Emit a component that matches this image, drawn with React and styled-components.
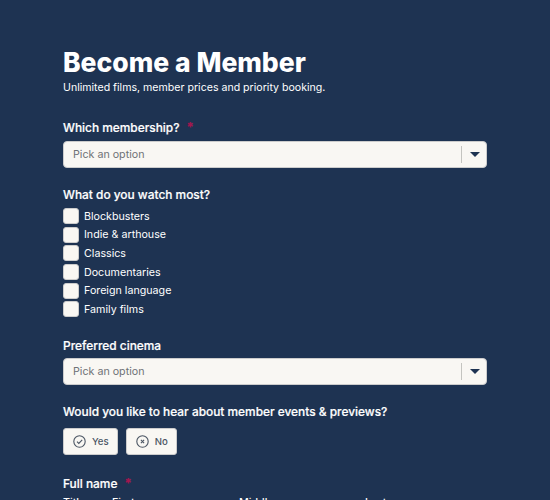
import styled, { createGlobalStyle } from 'styled-components';

const GlobalStyle = createGlobalStyle`
html, body {
  margin: 0;
  height: 100%;
  overflow: hidden;
  background: #1e3352;
  font-family: Inter, "Liberation Sans", sans-serif;
}
`

const Page = styled.div`
  padding: 44px 63px 0;
  color: #fff;
`

const Title = styled.h1`
  margin: 0;
  font-size: 26.5px;
  line-height: 36px;
  font-weight: 800;
  color: #fff;
`

const Subtitle = styled.p`
  margin: 0 0 23px;
  font-size: 10.6px;
  line-height: 16px;
  color: #fff;
`

const Field = styled.div`
  margin-bottom: ${props => props.$gap || 18}px;
`

const Label = styled.div`
  font-size: 11.9px;
  line-height: 18px;
  font-weight: 500;
  color: #fff;
  margin-bottom: ${props => props.$gap ?? 4}px;
  -webkit-text-stroke: 0.2px #fff;
`

const Star = styled.span`
  color: #a3174f;
  -webkit-text-stroke: 0.2px #a3174f;
  margin-left: 7px;
  font-size: 13px;
  line-height: 1;
  font-weight: 700;
`

const Select = styled.div`
  height: 27px;
  box-sizing: border-box;
  background: #f9f7f3;
  border: 1px solid #ccc;
  border-radius: 4px;
  display: flex;
  align-items: center;
  padding-left: 9px;
  font-size: 10.7px;
  color: #6f7276;
`

const Placeholder = styled.span`
  flex: 1;
`

const Divider = styled.span`
  width: 1px;
  height: 17px;
  background: #c4c4c0;
`

const Caret = styled.span`
  width: 0;
  height: 0;
  margin: 0 6px 0 8px;
  border-left: 5px solid transparent;
  border-right: 5px solid transparent;
  border-top: 5px solid #1e3352;
`

const CheckList = styled.div`
  display: flex;
  flex-direction: column;
  gap: 2.7px;
  margin-top: 4px;
`

const CheckRow = styled.div`
  display: flex;
  align-items: center;
  gap: 5px;
  font-size: 10.7px;
  height: 16px;
  color: #fff;
`

const Box = styled.span`
  width: 16px;
  height: 16px;
  box-sizing: border-box;
  background: #f9f7f3;
  border: 1px solid #ccc;
  border-radius: 3px;
`

const Buttons = styled.div`
  display: flex;
  gap: 8px;
  margin-top: 7px;
`

const Choice = styled.div`
  height: 27px;
  box-sizing: border-box;
  padding: 0 8px 0 9px;
  background: #f9f7f3;
  border: 1px solid #ccc;
  border-radius: 3px;
  display: flex;
  align-items: center;
  gap: 6px;
  font-size: 9.6px;
  font-weight: 500;
  color: #4b5563;
`

const NameRow = styled.div`
  display: grid;
  grid-template-columns: 49px 127px 126px 1fr;
  font-size: 10.7px;
  line-height: 16px;
  font-weight: 500;
  color: #fff;
`

const YesIcon = () => (
  <svg width="13" height="13" viewBox="0 0 13 13" fill="none" stroke="#4b5563" strokeWidth="1.1">
    <circle cx="6.5" cy="6.5" r="5.7" />
    <path d="M4 6.7l1.8 1.8 3.4-3.6" />
  </svg>
)

const NoIcon = () => (
  <svg width="13" height="13" viewBox="0 0 13 13" fill="none" stroke="#4b5563" strokeWidth="1.1">
    <circle cx="6.5" cy="6.5" r="5.7" />
    <path d="M4.9 4.9l3.2 3.2M8.1 4.9l-3.2 3.2" />
  </svg>
)

const films = ['Blockbusters', 'Indie & arthouse', 'Classics', 'Documentaries', 'Foreign language', 'Family films']

const Dropdown = () => (
  <Select>
    <Placeholder>Pick an option</Placeholder>
    <Divider />
    <Caret />
  </Select>
)

export default function App() {
  return (
    <Page>
      <GlobalStyle />
      <Title>Become a Member</Title>
      <Subtitle>Unlimited films, member prices and priority booking.</Subtitle>
      <Field>
        <Label>Which membership?<Star>*</Star></Label>
        <Dropdown />
      </Field>
      <Field $gap={19.5}>
        <Label>What do you watch most?</Label>
        <CheckList>
          {films.map(film => (
            <CheckRow key={film}><Box />{film}</CheckRow>
          ))}
        </CheckList>
      </Field>
      <Field>
        <Label $gap={3}>Preferred cinema</Label>
        <Dropdown />
      </Field>
      <Field $gap={20}>
        <Label>Would you like to hear about member events &amp; previews?</Label>
        <Buttons>
          <Choice><YesIcon />Yes</Choice>
          <Choice><NoIcon />No</Choice>
        </Buttons>
      </Field>
      <Field>
        <Label $gap={2}>Full name<Star>*</Star></Label>
        <NameRow>
          <span>Title</span>
          <span>First</span>
          <span>Middle</span>
          <span>Last</span>
        </NameRow>
      </Field>
    </Page>
  );
}
